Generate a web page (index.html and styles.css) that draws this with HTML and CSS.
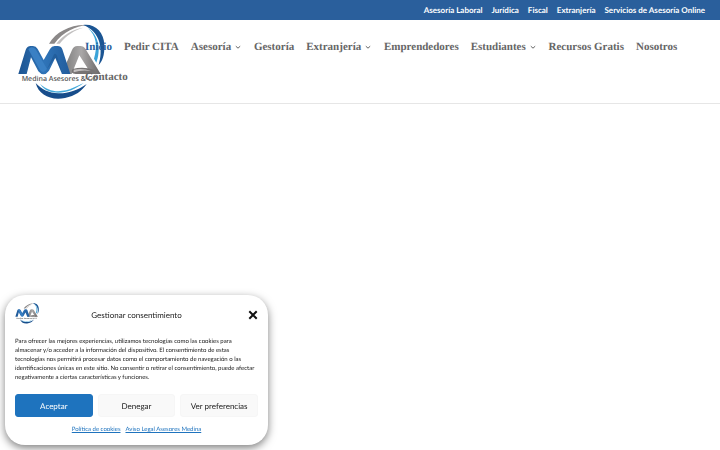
FILE: index.html
```html
<!DOCTYPE html>
<html lang="es">
<head>
    <meta charset="UTF-8">
    <meta name="viewport" content="width=device-width, initial-scale=1.0">
    <title>Medina Asesores</title>
    <link rel="stylesheet" href="styles.css">
</head>
<body>

    <!-- Logo and icons shared by the header and the cookie banner -->
    <svg width="0" height="0" class="sprite" aria-hidden="true">
        <defs>
            <linearGradient id="blue" x1="0" y1="0" x2="1" y2="0">
                <stop offset="0" stop-color="#1d5491"/>
                <stop offset="0.5" stop-color="#2f74b8"/>
                <stop offset="1" stop-color="#225c9c"/>
            </linearGradient>
            <linearGradient id="grey" x1="0" y1="0" x2="1" y2="0">
                <stop offset="0" stop-color="#777"/>
                <stop offset="0.5" stop-color="#aaa8a8"/>
                <stop offset="1" stop-color="#686565"/>
            </linearGradient>
        </defs>
        <symbol id="logo" viewBox="50 42 264 228">
            <path fill="#8b8888" d="M146 101C166 66 211 43 258 45C229 49 188 64 162 101Z"/>
            <path fill="#c2c0c0" d="M168 101C187 76 216 58 249 53C224 60 198 75 178 101Z"/>
            <path fill="#1b5593" d="M248 45C283 40 311 65 312 105C313 137 306 153 295 165C309 119 301 64 248 45Z"/>
            <path fill="#3ba4d9" d="M262 54C297 76 302 121 288 158L281 146C292 111 289 76 262 54Z"/>
            <path fill="#174d8b" d="M106 219C115 255 151 272 194 264C224 258 245 243 259 222C230 242 201 251 174 250C145 249 124 238 106 219Z"/>
            <path fill="#43a9da" d="M119 221C145 246 181 251 222 232L250 219C221 241 190 252 158 247C139 243 127 234 119 221Z"/>
            <path fill="url(#grey)" d="M184 192L215 120Q220 108 231 108H240Q250 108 256 118L301 192H273L237 136L214 192Z"/>
            <path fill="#777474" d="M217 177Q248 168 280 179L292 192H226Q208 191 217 177Z"/>
            <path fill="#c4c1c1" d="M220 179Q247 173 272 183Q244 178 220 187Z"/>
            <path fill="url(#blue)" d="M54 192L76 120Q80 108 91 108H98Q107 108 112 117L130 150L149 117Q154 108 163 108H172Q182 108 186 118L210 192H185L165 143L146 182Q130 203 114 184L92 142L79 192Z"/>
            <path fill="#3a80c4" d="M84 118Q94 105 106 118L140 177Q129 193 119 180L94 136Z"/>
            <path fill="#134780" d="M139 179L160 135Q164 126 170 137L184 187L164 144Z" opacity=".35"/>
            <text x="64" y="213" class="logo-name">Medina Asesores &amp; CO</text>
        </symbol>
        <symbol id="chevron" viewBox="0 0 8 8">
            <path d="M1.8 3.2L4 5.2L6.2 3.2" fill="none" stroke="currentColor" stroke-width="1"/>
        </symbol>
    </svg>

    <nav class="top-bar" aria-label="Secundario">
        <a href="#">Asesoría Laboral</a>
        <a href="#">Jurídica</a>
        <a href="#">Fiscal</a>
        <a href="#">Extranjería</a>
        <a href="#">Servicios de Asesoría Online</a>
    </nav>

    <header class="main-header">
        <a href="#" class="logo" aria-label="Medina Asesores"><svg><use href="#logo"/></svg></a>
        <nav class="menu" aria-label="Principal">
            <a href="#" class="active">Inicio</a>
            <a href="#">Pedir CITA</a>
            <a href="#">Asesoría <svg><use href="#chevron"/></svg></a>
            <a href="#">Gestoría</a>
            <a href="#">Extranjería <svg><use href="#chevron"/></svg></a>
            <a href="#">Emprendedores</a>
            <a href="#">Estudiantes <svg><use href="#chevron"/></svg></a>
            <a href="#">Recursos Gratis</a>
            <a href="#">Nosotros</a>
            <a href="#">Contacto</a>
        </nav>
    </header>

    <section class="cookies" role="dialog" aria-labelledby="cookies-title">
        <div class="cookies-header">
            <svg class="cookies-logo" aria-hidden="true"><use href="#logo"/></svg>
            <div id="cookies-title" class="cookies-title">Gestionar consentimiento</div>
            <button class="close" aria-label="Cerrar">
                <svg viewBox="0 0 10 10"><path d="M2 2L8 8M8 2L2 8" stroke="#111" stroke-width="2" stroke-linecap="square"/></svg>
            </button>
        </div>
        <p class="cookies-text">Para ofrecer las mejores experiencias, utilizamos tecnologías como las cookies para almacenar y/o acceder a la información del dispositivo. El consentimiento de estas tecnologías nos permitirá procesar datos como el comportamiento de navegación o las identificaciones únicas en este sitio. No consentir o retirar el consentimiento, puede afectar negativamente a ciertas características y funciones.</p>
        <div class="cookies-buttons">
            <button class="btn accept">Aceptar</button>
            <button class="btn">Denegar</button>
            <button class="btn">Ver preferencias</button>
        </div>
        <div class="cookies-links">
            <a href="#">Política de cookies</a>
            <a href="#">Aviso Legal Asesores Medina</a>
        </div>
    </section>

</body>
</html>
```
FILE: styles.css
```css
* {
    box-sizing: border-box;
}

body {
    margin: 0;
    font-family: Lato, sans-serif;
    background: #fff;
    color: #222;
    text-rendering: geometricPrecision;
}

.sprite {
    position: absolute;
}

.sprite,
#logo {
    overflow: visible;
}

.top-bar {
    display: flex;
    justify-content: flex-end;
    gap: 9px;
    padding: 3px 15px;
    background: #2a5f9c;
    font-size: 8px;
    font-weight: bold;
    line-height: 14px;
}

.top-bar a {
    color: #fff;
    text-decoration: none;
}

.main-header {
    position: relative;
    padding: 12px 15px 11px 85px;
    border-bottom: 1px solid #e6e6e6;
}

/* The logo runs under the first menu items */
.logo {
    position: absolute;
    top: 4px;
    left: 17px;
}

.logo svg {
    display: block;
    width: 88px;
    height: 76px;
    overflow: visible;
}

.logo-name {
    font-family: "Open Sans", sans-serif;
    font-size: 21px;
    font-weight: 600;
    fill: #555;
}

.menu {
    position: relative;
    display: flex;
    flex-wrap: wrap;
    column-gap: 12px;
    font-family: "Liberation Serif", serif;
    font-size: 11px;
    font-weight: bold;
    line-height: 30px;
}

.menu a {
    color: #666;
    text-decoration: none;
}

.menu a.active {
    color: #2a5f9c;
}

.menu svg {
    width: 8px;
    height: 8px;
    vertical-align: -1px;
}

.cookies {
    position: fixed;
    left: 5px;
    bottom: 5px;
    width: 263px;
    padding: 8px 10px 11px;
    background: #fff;
    border-radius: 20px;
    box-shadow: 0 3px 8px rgba(0, 0, 0, 0.5);
}

.cookies-header {
    display: grid;
    grid-template-columns: 24px 1fr 24px;
    align-items: center;
}

.cookies-logo {
    align-self: start;
    width: 24px;
    height: 21px;
    overflow: visible;
}

.cookies-title {
    text-align: center;
    font-size: 8px;
    line-height: 24px;
}

.close {
    justify-self: end;
    width: 10px;
    height: 10px;
    padding: 0;
    border: none;
    background: none;
    cursor: pointer;
}

.close svg {
    display: block;
}

.cookies-text {
    margin: 10px 0 12px;
    font-size: 6px;
    line-height: 9px;
}

.cookies-buttons {
    display: grid;
    grid-template-columns: repeat(3, 1fr);
    gap: 5px;
}

.btn {
    height: 23px;
    padding: 0;
    border: 1px solid #f6f6f6;
    border-radius: 3px;
    background: #f9f9f9;
    color: #222;
    font-family: inherit;
    font-size: 8px;
    text-rendering: inherit;
    cursor: pointer;
}

.btn.accept {
    border-color: #1e73be;
    background: #1e73be;
    color: #fff;
}

.cookies-links {
    display: flex;
    justify-content: center;
    gap: 5px;
    margin-top: 8px;
    font-size: 6px;
    line-height: 9px;
}

.cookies-links a {
    color: #1e73be;
}
```
